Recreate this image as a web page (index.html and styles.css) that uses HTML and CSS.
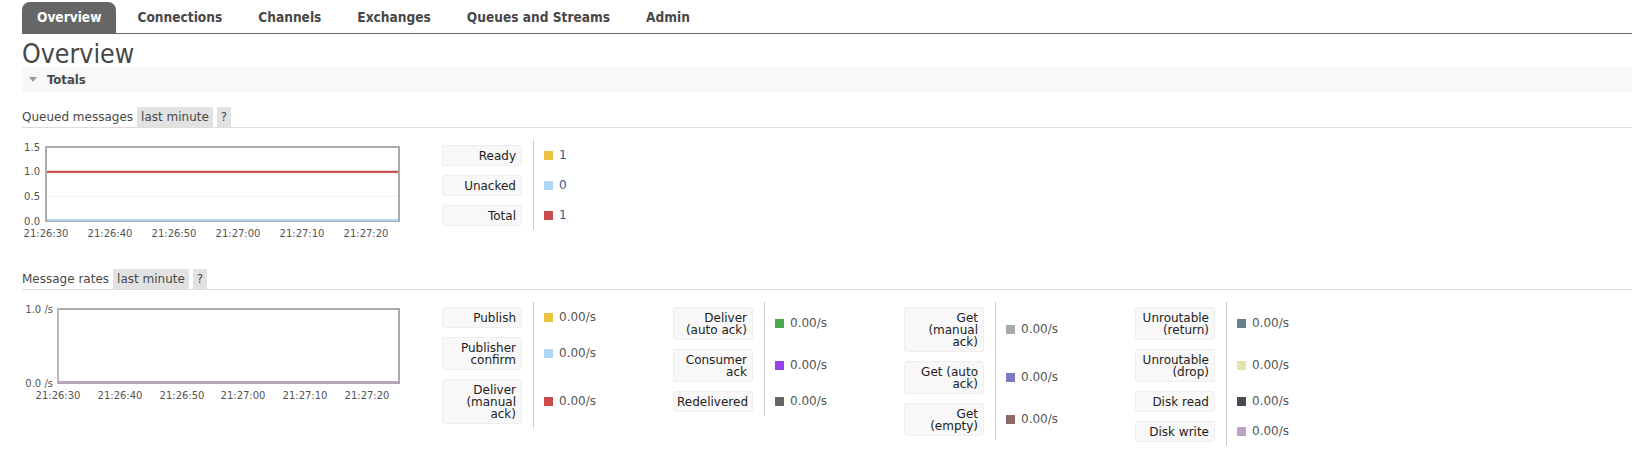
FILE: index.html
```html
<!DOCTYPE html>
<html lang="en">
<head>
    <meta charset="UTF-8">
    <meta name="viewport" content="width=device-width, initial-scale=1.0">
    <title>RabbitMQ Management</title>
    <link rel="stylesheet" href="styles.css">
</head>
<body>
    <div class="page">
        <ul class="tabs">
            <li class="active"><a href="#">Overview</a></li>
            <li><a href="#">Connections</a></li>
            <li><a href="#">Channels</a></li>
            <li><a href="#">Exchanges</a></li>
            <li><a href="#">Queues and Streams</a></li>
            <li><a href="#">Admin</a></li>
        </ul>

        <h1>Overview</h1>

        <div class="section-bar"><span class="arrow"></span>Totals</div>

        <div class="section-head">
            <span class="title">Queued messages</span>
            <span class="badge">last minute</span>
            <span class="badge">?</span>
        </div>
        <div class="chart-row">
            <svg class="chart" width="400" height="100" viewBox="0 0 400 100">
                <rect x="24" y="7" width="353" height="74" fill="#fff" stroke="#aaa" stroke-width="2"/>
                <line x1="25" y1="56.3" x2="376" y2="56.3" stroke="#eee" stroke-width="1"/>
                <line x1="25" y1="32.6" x2="376" y2="32.6" stroke="#e8825a" stroke-width="1"/>
                <line x1="25" y1="31.7" x2="376" y2="31.7" stroke="#cb4b4b" stroke-width="2"/>
                <line x1="25" y1="80" x2="376" y2="80" stroke="#afd8f8" stroke-width="2"/>
                <g class="tick" text-anchor="end">
                    <text x="18" y="10.5">1.5</text>
                    <text x="18" y="35.2">1.0</text>
                    <text x="18" y="59.8">0.5</text>
                    <text x="18" y="84.5">0.0</text>
                </g>
                <g class="tick" text-anchor="middle">
                    <text x="24" y="96.5">21:26:30</text>
                    <text x="88" y="96.5">21:26:40</text>
                    <text x="152" y="96.5">21:26:50</text>
                    <text x="216" y="96.5">21:27:00</text>
                    <text x="280" y="96.5">21:27:10</text>
                    <text x="344" y="96.5">21:27:20</text>
                </g>
            </svg>
            <div class="legend">
                <table class="facts">
                    <tr><th><div class="label">Ready</div></th><td><span class="swatch c1"></span><span class="count">1</span></td></tr>
                    <tr><th><div class="label">Unacked</div></th><td><span class="swatch c2"></span><span class="count">0</span></td></tr>
                    <tr><th><div class="label">Total</div></th><td><span class="swatch c3"></span><span class="count">1</span></td></tr>
                </table>
            </div>
        </div>

        <div class="section-head second">
            <span class="title">Message rates</span>
            <span class="badge">last minute</span>
            <span class="badge">?</span>
        </div>
        <div class="chart-row">
            <svg class="chart" width="400" height="100" viewBox="0 0 400 100">
                <rect x="36" y="7" width="341" height="74" fill="#fff" stroke="#aaa" stroke-width="2"/>
                <line x1="36" y1="6" x2="36" y2="81" stroke="#bbb" stroke-width="2"/>
                <line x1="36" y1="80" x2="377" y2="80" stroke="#bca3c5" stroke-width="2"/>
                <g class="tick" text-anchor="end">
                    <text x="31" y="10.5">1.0 /s</text>
                    <text x="31" y="84.5">0.0 /s</text>
                </g>
                <g class="tick" text-anchor="middle">
                    <text x="36" y="96.5">21:26:30</text>
                    <text x="98" y="96.5">21:26:40</text>
                    <text x="160" y="96.5">21:26:50</text>
                    <text x="221" y="96.5">21:27:00</text>
                    <text x="283" y="96.5">21:27:10</text>
                    <text x="345" y="96.5">21:27:20</text>
                </g>
            </svg>
            <div class="legend">
                <table class="facts">
                    <tr><th><div class="label">Publish</div></th><td><span class="swatch c1"></span>0.00/s</td></tr>
                    <tr><th><div class="label">Publisher confirm</div></th><td><span class="swatch c2"></span>0.00/s</td></tr>
                    <tr><th><div class="label">Deliver (manual ack)</div></th><td><span class="swatch c3"></span>0.00/s</td></tr>
                </table>
                <table class="facts">
                    <tr><th><div class="label">Deliver (auto ack)</div></th><td><span class="swatch c4"></span>0.00/s</td></tr>
                    <tr><th><div class="label">Consumer ack</div></th><td><span class="swatch c5"></span>0.00/s</td></tr>
                    <tr><th><div class="label">Redelivered</div></th><td><span class="swatch c6"></span>0.00/s</td></tr>
                </table>
                <table class="facts">
                    <tr><th><div class="label">Get (manual ack)</div></th><td><span class="swatch c7"></span>0.00/s</td></tr>
                    <tr><th><div class="label">Get (auto ack)</div></th><td><span class="swatch c8"></span>0.00/s</td></tr>
                    <tr><th><div class="label">Get (empty)</div></th><td><span class="swatch c9"></span>0.00/s</td></tr>
                </table>
                <table class="facts">
                    <tr><th><div class="label">Unroutable (return)</div></th><td><span class="swatch c10"></span>0.00/s</td></tr>
                    <tr><th><div class="label">Unroutable (drop)</div></th><td><span class="swatch c11"></span>0.00/s</td></tr>
                    <tr><th><div class="label">Disk read</div></th><td><span class="swatch c12"></span>0.00/s</td></tr>
                    <tr><th><div class="label">Disk write</div></th><td><span class="swatch c13"></span>0.00/s</td></tr>
                </table>
            </div>
        </div>
    </div>
</body>
</html>
```

FILE: styles.css
```css
body {
    margin: 0;
    font-family: "DejaVu Sans", Verdana, sans-serif;
    font-size: 12px;
    color: #484848;
    background-color: #fff;
}
.page {
    padding-left: 22px;
    overflow: hidden;
}
.tabs {
    display: flex;
    list-style: none;
    margin: 2px 0 0;
    padding: 0;
    border-bottom: 1px solid #666;
}
.tabs li {
    margin-right: 6px;
}
.tabs a {
    display: block;
    padding: 0 15px;
    line-height: 31px;
    font-family: "DejaVu Sans Condensed", "DejaVu Sans", sans-serif;
    font-stretch: condensed;
    font-weight: bold;
    font-size: 13.6px;
    color: #484848;
    text-decoration: none;
    border-radius: 8px 8px 0 0;
}
.tabs li.active a {
    background-color: #666;
    color: #fff;
}
h1 {
    margin: 7px 0 0;
    font-family: "DejaVu Sans Condensed", "DejaVu Sans", sans-serif;
    font-stretch: condensed;
    font-weight: normal;
    font-size: 26.5px;
    line-height: 26px;
    color: #484848;
}
.section-bar {
    height: 25px;
    line-height: 25px;
    padding-left: 7px;
    background-color: #f8f8f8;
    font-family: "DejaVu Sans Condensed", "DejaVu Sans", sans-serif;
    font-stretch: condensed;
    font-weight: bold;
    font-size: 13px;
    color: #484848;
}
.arrow {
    display: inline-block;
    width: 0;
    height: 0;
    margin-right: 10px;
    vertical-align: 2px;
    border-left: 4px solid transparent;
    border-right: 4px solid transparent;
    border-top: 5px solid #999;
}
.section-head {
    display: flex;
    align-items: center;
    margin-top: 15px;
    border-bottom: 1px solid #ddd;
}
.section-head.second {
    margin-top: 29px;
}
.section-head .title {
    margin-right: 4px;
}
.badge {
    line-height: 20px;
    padding: 0 4px;
    margin-right: 4px;
    background-color: #e2e2e2;
}
.chart-row {
    display: flex;
    align-items: flex-start;
    margin-top: 12px;
}
.chart {
    display: block;
    flex: none;
    margin-right: 20px;
}
.tick text {
    font-family: "DejaVu Sans", Verdana, sans-serif;
    font-size: 10px;
    fill: #545454;
}
.legend {
    display: flex;
    align-items: flex-start;
}
.facts {
    width: 231px;
    border-collapse: separate;
    border-spacing: 0;
}
.facts th {
    width: 80px;
    padding: 4.5px 11px 4.5px 0;
    vertical-align: middle;
    font-weight: normal;
    text-align: right;
}
.facts .label {
    box-sizing: border-box;
    width: 80px;
    padding: 4px 5px 3px 3px;
    line-height: 12px;
    color: #222;
    background-color: #f8f8f8;
    border: 1px solid #eee;
    border-radius: 3px;
}
.facts td {
    padding: 0 0 0 10px;
    vertical-align: middle;
    border-left: 1px solid #ccc;
    color: #555;
    white-space: nowrap;
}
.swatch {
    display: inline-block;
    width: 9px;
    height: 9px;
    margin-right: 6px;
    vertical-align: -1px;
}
.count {
    color: #1f5d99;
}
.c1 { background-color: #edc240; }
.c2 { background-color: #afd8f8; }
.c3 { background-color: #cb4b4b; }
.c4 { background-color: #4da74d; }
.c5 { background-color: #9440ed; }
.c6 { background-color: #666666; }
.c7 { background-color: #aaaaaa; }
.c8 { background-color: #7c79c3; }
.c9 { background-color: #8e6767; }
.c10 { background-color: #67808e; }
.c11 { background-color: #e5e4ae; }
.c12 { background-color: #4b4a54; }
.c13 { background-color: #bca3c5; }
```
